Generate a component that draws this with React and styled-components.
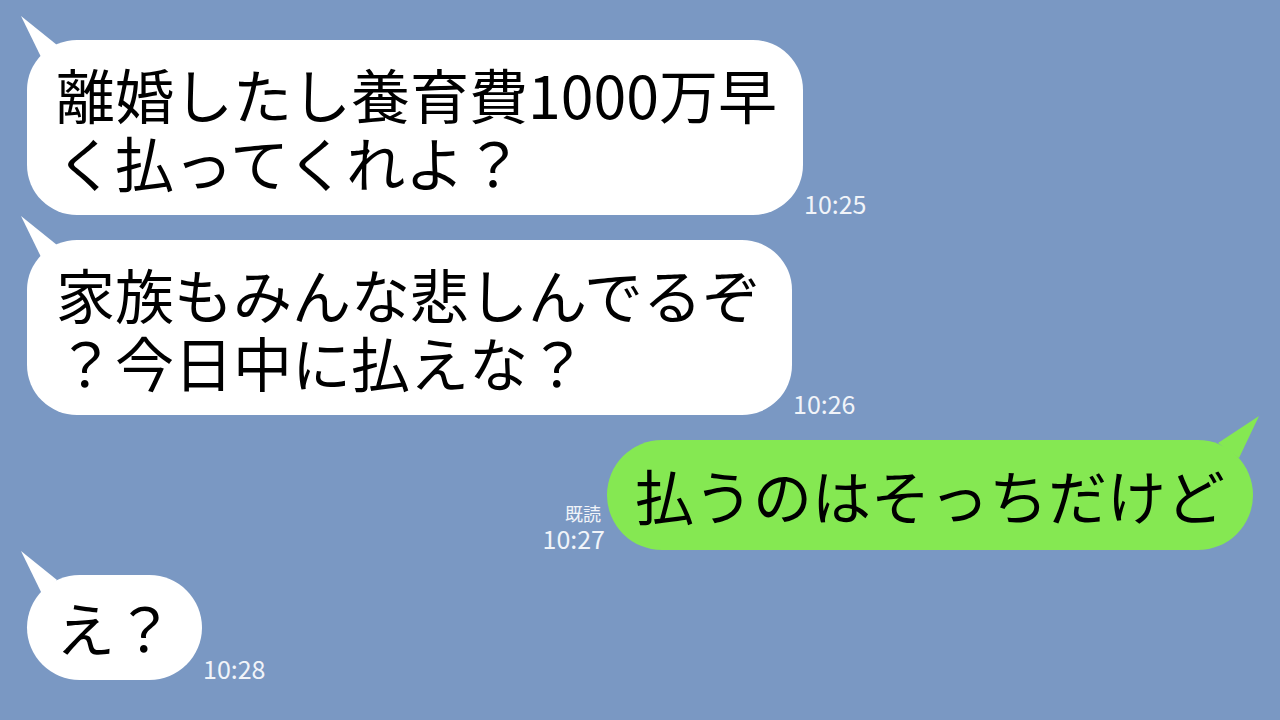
import React from "react";
import styled, { createGlobalStyle } from "styled-components";

const GlobalStyle = createGlobalStyle`
  html, body {
    margin: 0;
    padding: 0;
    background: #7a98c3;
  }
  * { box-sizing: border-box; }
`;

const Screen = styled.div`
  width: 1280px;
  height: 720px;
  overflow: hidden;
  background: #7a98c3;
  padding: 40px 27px 0 27px;
  display: flex;
  flex-direction: column;
  gap: 25px;
  font-family: "Noto Sans CJK JP", "Noto Sans", sans-serif;
`;

const Row = styled.div`
  display: flex;
  align-items: flex-end;
  justify-content: ${(p) => (p.$mine ? "flex-end" : "flex-start")};
`;

const Bubble = styled.div`
  position: relative;
  background: ${(p) => (p.$mine ? "#85e852" : "#ffffff")};
  color: #000;
  font-size: 59px;
  line-height: 68px;
  white-space: nowrap;
  padding: ${(p) => p.$pad};
  border-radius: ${(p) => p.$radius}px;
  ${(p) => (p.$width ? `width: ${p.$width}px;` : "")}
`;

const Tail = styled.svg`
  position: absolute;
  top: -24px;
  ${(p) => (p.$mine ? "right: -6px;" : "left: -6px;")}
  width: 42px;
  height: 44px;
  overflow: visible;
`;

const Meta = styled.div`
  display: flex;
  flex-direction: column;
  align-items: ${(p) => (p.$mine ? "flex-end" : "flex-start")};
  color: #f1f4f9;
  ${(p) => (p.$mine ? "margin-right: 2px;" : "margin-left: 1px;")}
`;

const Read = styled.span`
  font-size: 18px;
  line-height: 20px;
  margin-right: 4px;
  margin-bottom: 3px;
`;

const Time = styled.span`
  font-size: 25px;
  line-height: 24px;
`;

function TheirTail() {
  return (
    <Tail viewBox="0 0 42 44">
      <polygon points="0,0 21,43 36,29" fill="#ffffff" />
    </Tail>
  );
}

function MyTail() {
  return (
    <Tail $mine viewBox="0 0 42 44">
      <polygon points="42,0 1,27 22,42" fill="#85e852" />
    </Tail>
  );
}

function Their({ lines, time, pad, radius, width }) {
  return (
    <Row>
      <Bubble $pad={pad} $radius={radius} $width={width}>
        <TheirTail />
        {lines.map((l, i) => (
          <div key={i}>{l}</div>
        ))}
      </Bubble>
      <Meta>
        <Time>{time}</Time>
      </Meta>
    </Row>
  );
}

export default function App() {
  return (
    <>
      <GlobalStyle />
      <Screen>
        <Their
          lines={["離婚したし養育費1000万早", "く払ってくれよ？"]}
          time="10:25"
          pad="20px 28px 19px 29px"
          radius={50}
          width={776}
        />
        <Their
          lines={["家族もみんな悲しんでるぞ", "？今日中に払えな？"]}
          time="10:26"
          pad="20px 27px 19px 29px"
          radius={50}
          width={765}
        />
        <Row $mine>
          <Meta $mine>
            <Read>既読</Read>
            <Time>10:27</Time>
          </Meta>
          <Bubble $mine $pad="21px 28px 21px 28px" $radius={56}>
            <MyTail />
            <div>払うのはそっちだけど</div>
          </Bubble>
        </Row>
        <Their
          lines={["え？"]}
          time="10:28"
          pad="18px 28px 19px 29px"
          radius={53}
        />
      </Screen>
    </>
  );
}
